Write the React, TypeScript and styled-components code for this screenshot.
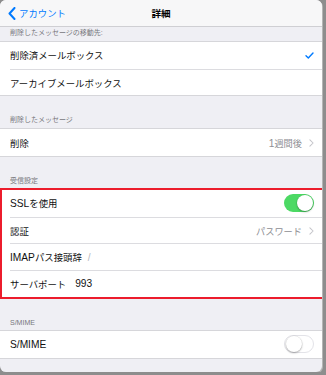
import React from 'react'
import styled, { createGlobalStyle } from 'styled-components'

const GlobalStyle = createGlobalStyle`
  html, body {
    margin: 0;
    padding: 0;
    background: #8d8d8d;
  }
  body {
    font-family: "Liberation Sans", "Noto Sans CJK JP", sans-serif;
    -webkit-font-smoothing: antialiased;
  }
`

const Screen = styled.div`
  width: 322px;
  height: 372px;
  background: #efeff4;
  border-radius: 6px;
  overflow: hidden;
  display: flex;
  flex-direction: column;
  box-shadow: 1px 1px 0 #b5b5b5;
`

const NavBar = styled.div`
  height: 27px;
  flex-shrink: 0;
  background: #f7f7f8;
  border-bottom: 1px solid #cfcfd3;
  display: grid;
  grid-template-columns: 1fr auto 1fr;
  align-items: center;
  box-sizing: border-box;
`

const BackButton = styled.div`
  display: flex;
  align-items: center;
  gap: 3px;
  padding-left: 8px;
  color: #007aff;
  font-size: 9.4px;
`

const Title = styled.div`
  font-size: 9.6px;
  font-weight: bold;
  color: #000;
`

const SectionHeader = styled.div<{ $gap: number }>`
  height: ${({ $gap }) => $gap}px;
  flex-shrink: 0;
  display: flex;
  align-items: flex-end;
  padding: 0 0 4px 10px;
  box-sizing: border-box;
  font-size: 7px;
  color: #77777c;
`

const Group = styled.div`
  background: #fff;
  border-top: 1px solid #d6d6da;
  border-bottom: 1px solid #d6d6da;
  position: relative;
  flex-shrink: 0;
`

const Highlight = styled.div`
  position: absolute;
  left: 0;
  right: -2px;
  top: -2px;
  bottom: -2px;
  border: 2.6px solid #ec1c2c;
  pointer-events: none;
`

const Rows = styled.div`
  display: flex;
  flex-direction: column;
`

const Cell = styled.div<{ $first?: boolean }>`
  height: 26.7px;
  display: flex;
  align-items: center;
  padding-right: 8px;
  margin-left: 10px;
  box-sizing: border-box;
  font-size: 9.4px;
  color: #111;
  white-space: nowrap;
  border-top: ${({ $first }) => ($first ? 'none' : '1px solid #dcdce0')};
`

const Label = styled.span`
  flex: 1;
`

const Latin = styled.span`
  font-size: 10.2px;
`

const Inline = styled.span<{ $muted?: boolean }>`
  color: ${({ $muted }) => ($muted ? '#b8b8bd' : '#111')};
  margin-left: ${({ $muted }) => ($muted ? '6px' : '9px')};
  font-size: 10.2px;
`

const Detail = styled.span`
  color: #8e8e93;
  font-size: 9.2px;
  display: flex;
  align-items: center;
  gap: 7px;
`

const Toggle = styled.div<{ $on?: boolean }>`
  width: 30px;
  height: 18px;
  border-radius: 9px;
  box-sizing: border-box;
  background: ${({ $on }) => ($on ? '#4cd964' : '#fff')};
  border: ${({ $on }) => ($on ? 'none' : '1.2px solid #e3e3e8')};
  display: flex;
  align-items: center;
  justify-content: ${({ $on }) => ($on ? 'flex-end' : 'flex-start')};
  padding: 1px;
`

const Knob = styled.div`
  width: 16px;
  height: 16px;
  border-radius: 50%;
  background: #fff;
  box-shadow: 0 1px 2px rgba(0, 0, 0, 0.3), 0 0 0 0.5px rgba(0, 0, 0, 0.08);
`

const Spacer = styled.div`
  flex: 1;
`

function Chevron({ color, w, h }: { color: string; w: number; h: number }) {
  return (
    <svg width={w} height={h} viewBox="0 0 6 10" fill="none">
      <path d="M1 1l4 4-4 4" stroke={color} strokeWidth="1.3" strokeLinecap="round" strokeLinejoin="round" />
    </svg>
  )
}

function BackChevron() {
  return (
    <svg width="8" height="13" viewBox="0 0 8 13" fill="none">
      <path d="M6.5 1L1.5 6.5l5 5.5" stroke="#007aff" strokeWidth="2" strokeLinecap="round" strokeLinejoin="round" />
    </svg>
  )
}

function Check() {
  return (
    <svg width="9" height="7" viewBox="0 0 9 7" fill="none">
      <path d="M1 3.8l2.3 2.2L8 1" stroke="#007aff" strokeWidth="1.4" strokeLinecap="round" strokeLinejoin="round" />
    </svg>
  )
}

export default function App() {
  return (
    <>
      <GlobalStyle />
      <Screen>
        <NavBar>
          <BackButton>
            <BackChevron />
            アカウント
          </BackButton>
          <Title>詳細</Title>
          <div />
        </NavBar>

        <SectionHeader $gap={14}>削除したメッセージの移動先:</SectionHeader>
        <Group>
          <Rows>
            <Cell $first>
              <Label>削除済メールボックス</Label>
              <Check />
            </Cell>
            <Cell>
              <Label>アーカイブメールボックス</Label>
            </Cell>
          </Rows>
        </Group>

        <SectionHeader $gap={32}>削除したメッセージ</SectionHeader>
        <Group>
          <Rows>
            <Cell $first>
              <Label>削除</Label>
              <Detail>
                <span>
                  <Latin>1</Latin>週間後
                </span>
                <Chevron color="#c4c4c9" w={5} h={8} />
              </Detail>
            </Cell>
          </Rows>
        </Group>

        <SectionHeader $gap={32}>受信設定</SectionHeader>
        <Group>
          <Rows>
            <Cell $first>
              <Label>
                <Latin>SSL</Latin>を使用
              </Label>
              <Toggle $on>
                <Knob />
              </Toggle>
            </Cell>
            <Cell>
              <Label>認証</Label>
              <Detail>
                パスワード
                <Chevron color="#c4c4c9" w={5} h={8} />
              </Detail>
            </Cell>
            <Cell>
              <span>
                <Latin>IMAP</Latin>パス接頭辞
              </span>
              <Inline $muted>/</Inline>
              <Spacer />
            </Cell>
            <Cell>
              <span>サーバポート</span>
              <Inline>993</Inline>
              <Spacer />
            </Cell>
          </Rows>
          <Highlight />
        </Group>

        <SectionHeader $gap={32}>S/MIME</SectionHeader>
        <Group>
          <Rows>
            <Cell $first>
              <Label>
                <Latin>S/MIME</Latin>
              </Label>
              <Toggle>
                <Knob />
              </Toggle>
            </Cell>
          </Rows>
        </Group>
      </Screen>
    </>
  )
}
